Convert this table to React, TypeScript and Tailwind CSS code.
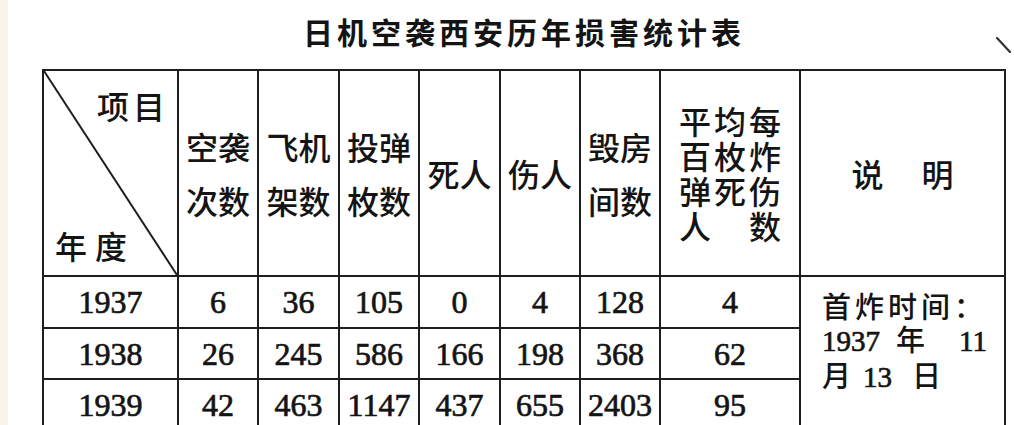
import React from "react";

const rows = [
  ["1937", "6", "36", "105", "0", "4", "128", "4"],
  ["1938", "26", "245", "586", "166", "198", "368", "62"],
  ["1939", "42", "463", "1147", "437", "655", "2403", "95"],
];

const rowHeights = ["h-[52px]", "h-[51px]", "h-[52px]"];

const cjk = "font-['Noto_Sans_CJK_SC',sans-serif]";
const serif = "font-['Liberation_Serif','Noto_Sans_CJK_SC',serif] [-webkit-text-stroke:0.7px_#141414]";
const cell = "border-r-2 border-b-2 border-[#1e1e1e] text-center align-middle p-0";

function TwoLine({ a, b }: { a: string; b: string }) {
  return (
    <div className="text-[32px] leading-[54px]">
      <div>{a}</div>
      <div>{b}</div>
    </div>
  );
}

export default function App() {
  const avg = ["平", "均", "每", "百", "枚", "炸", "弹", "死", "伤", "人", "", "数"];

  return (
    <div className={`relative w-[1014px] h-[425px] overflow-hidden bg-white text-[#141414] flex ${cjk}`}>
      <div className="w-[8px] h-full bg-[#f6f4ea]" />
      <div className="pl-[34px] pt-[14px]">
        <h1 className="w-[964px] text-center text-[30px] leading-[34px] font-bold tracking-[4px]">
          日机空袭西安历年损害统计表
        </h1>

        <table className="mt-[21px] w-[964px] table-fixed border-separate border-spacing-0 border-l-2 border-t-2 border-[#1e1e1e]">
          <colgroup>
            <col className="w-[135px]" />
            <col className="w-[80px]" />
            <col className="w-[81px]" />
            <col className="w-[80px]" />
            <col className="w-[81px]" />
            <col className="w-[80px]" />
            <col className="w-[80px]" />
            <col className="w-[140px]" />
            <col className="w-[205px]" />
          </colgroup>
          <thead>
            <tr className="h-[206px]">
              <th className={`${cell} font-medium`}>
                <div className="relative h-[204px] flex flex-col justify-between text-[32px] leading-[32px]">
                  <svg className="absolute inset-0 w-full h-full overflow-visible" preserveAspectRatio="none">
                    <line x1="0" y1="0" x2="100%" y2="100%" stroke="#1e1e1e" strokeWidth="2" />
                  </svg>
                  <div className="pl-[53px] pt-[18px] text-left tracking-[4px]">项目</div>
                  <div className="pl-[11px] pb-[14px] text-left tracking-[8px]">年度</div>
                </div>
              </th>
              <th className={`${cell} font-medium`}>
                <TwoLine a="空袭" b="次数" />
              </th>
              <th className={`${cell} font-medium`}>
                <TwoLine a="飞机" b="架数" />
              </th>
              <th className={`${cell} font-medium`}>
                <TwoLine a="投弹" b="枚数" />
              </th>
              <th className={`${cell} font-medium text-[32px]`}>死人</th>
              <th className={`${cell} font-medium text-[32px]`}>伤人</th>
              <th className={`${cell} font-medium`}>
                <TwoLine a="毁房" b="间数" />
              </th>
              <th className={`${cell} font-medium`}>
                <div className="mx-auto w-fit grid grid-cols-[35px_35px_35px] text-[32px] leading-[35px]">
                  {avg.map((c, i) => (
                    <span key={i} className="text-center">
                      {c}
                    </span>
                  ))}
                </div>
              </th>
              <th className={`${cell} font-medium text-[32px]`}>
                <span>说</span>
                <span className="ml-[38px]">明</span>
              </th>
            </tr>
          </thead>
          <tbody>
            {rows.map((r, ri) => (
              <tr key={r[0]} className={rowHeights[ri]}>
                {r.map((v, ci) => (
                  <td key={ci} className={`${cell} ${serif} text-[32px]`}>
                    {v}
                  </td>
                ))}
                {ri === 0 && (
                  <td rowSpan={3} className={`${cell} align-top text-left pl-[21px] pt-[12px] font-medium`}>
                    <div className="text-[29px] leading-[33px] tracking-[4px]">首炸时间：</div>
                    <div className="flex items-baseline text-[29px] leading-[33px]">
                      <span className={`${serif} text-[29px]`}>1937</span>
                      <span className="ml-[16px]">年</span>
                      <span className={`${serif} text-[29px] ml-[34px]`}>11</span>
                    </div>
                    <div className="flex items-baseline text-[29px] leading-[33px]">
                      <span>月</span>
                      <span className={`${serif} text-[29px] ml-[12px]`}>13</span>
                      <span className="ml-[20px]">日</span>
                    </div>
                  </td>
                )}
              </tr>
            ))}
          </tbody>
        </table>
      </div>

      <svg className="absolute left-[996px] top-[37px] w-[15px] h-[16px]" viewBox="0 0 15 16">
        <line x1="1" y1="1" x2="14" y2="15" stroke="#333" strokeWidth="2.2" strokeLinecap="round" />
      </svg>
    </div>
  );
}
